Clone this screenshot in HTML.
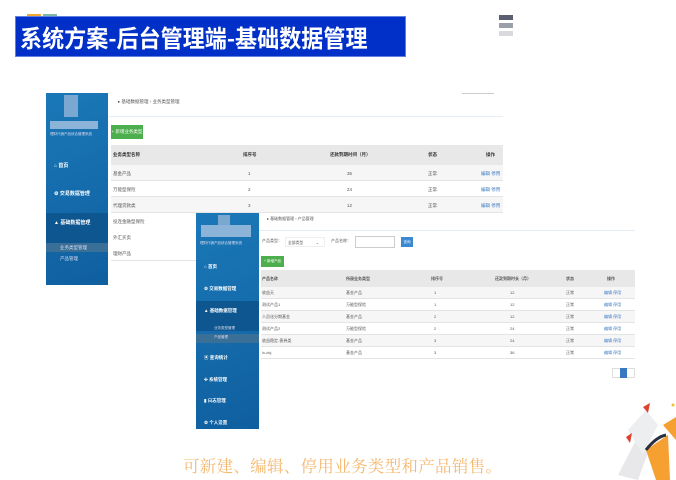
<!DOCTYPE html>
<html><head><meta charset="utf-8"><style>
*{margin:0;padding:0;box-sizing:border-box}
body{width:676px;height:480px;background:#fff;position:relative;overflow:hidden;font-family:"Liberation Sans","Noto Sans CJK SC",sans-serif}
.abs{position:absolute}
.t{font-size:4.5px;color:#555;white-space:nowrap}
.sb{background:linear-gradient(160deg,#1b78b8,#0f5f9f);}
.nav{position:absolute;left:8px;color:#fff;font-size:5px;font-weight:bold}
</style></head><body>
<div class="abs" style="left:27px;top:14px;width:14px;height:3px;background:#f0a830"></div>
<div class="abs" style="left:43px;top:14px;width:14px;height:3px;background:#7fb8a8"></div>
<div class="abs" style="left:15px;top:16px;width:391px;height:41px;background:#0030c8;border:1px solid #6080e0"></div>
<div class="abs" style="left:20px;top:20px;color:#fff;font-size:24px;font-weight:bold;line-height:34px;font-family:'Noto Sans CJK SC',sans-serif;transform:scaleX(0.92);transform-origin:left;white-space:nowrap">系统方案-后台管理端-基础数据管理</div>
<div class="abs" style="left:499px;top:15px;width:14px;height:5px;background:#5a6070"></div>
<div class="abs" style="left:499px;top:23px;width:14px;height:5px;background:#9aa0aa"></div>
<div class="abs" style="left:499px;top:31px;width:14px;height:5px;background:#d8dade"></div>

<!-- screenshot 1 -->
<div class="abs sb" style="left:46px;top:93px;width:62px;height:192px">
 <div class="abs" style="left:18px;top:2px;width:14px;height:22px;background:#7aa8d0"></div>
 <div class="abs" style="left:4px;top:28px;width:48px;height:8px;background:#8cb4d8"></div>
 <div class="abs t" style="left:4px;top:39px;color:#dde;font-size:3.5px">理财代销产品综合管理系统</div>
 <div class="nav" style="top:69px">⌂ 首页</div>
 <div class="nav" style="top:97px">⚙ 交易数据管理</div>
 <div class="abs" style="left:0;top:120px;width:62px;height:32px;background:#0d5690"></div>
 <div class="nav" style="top:126px">▲ 基础数据管理</div>
 <div class="abs" style="left:0;top:150px;width:62px;height:9px;background:#3a6f98"></div>
 <div class="abs t" style="left:14px;top:152px;color:#dde">业务类型管理</div>
 <div class="abs t" style="left:14px;top:163px;color:#dde">产品管理</div>
</div>
<div class="abs" style="left:108px;top:93px;width:395px;height:192px;background:#fff">
 <div class="abs t" style="left:10px;top:6px">▸ 基础数据管理 › 业务类型管理</div>
 <div class="abs" style="left:0;top:23px;width:395px;height:1px;background:#e6eef4"></div>
 <div class="abs" style="left:3px;top:32px;width:32px;height:14px;background:#4cae4c;color:#fff;font-size:4.5px;line-height:14px;text-align:center">+ 新增业务类型</div>
 <div class="abs" style="left:3px;top:52px;width:392px;height:20px;background:#e8e8e8"></div>
 <div class="abs t" style="left:5px;top:59px;font-weight:bold;color:#333">业务类型名称</div>
 <div class="abs t" style="left:135px;top:59px;font-weight:bold;color:#333">排序号</div>
 <div class="abs t" style="left:222px;top:59px;font-weight:bold;color:#333">还款到期时间（月）</div>
 <div class="abs t" style="left:320px;top:59px;font-weight:bold;color:#333">状态</div>
 <div class="abs t" style="left:378px;top:59px;font-weight:bold;color:#333">操作</div>
 <div class="abs" style="left:3px;top:72px;width:392px;height:16px;background:#f6f6f6;border-bottom:1px solid #e4e4e4"></div>
 <div class="abs" style="left:3px;top:88px;width:392px;height:16px;border-bottom:1px solid #e4e4e4"></div>
 <div class="abs" style="left:3px;top:104px;width:392px;height:16px;background:#f6f6f6;border-bottom:1px solid #e4e4e4"></div>
 <div class="abs" style="left:3px;top:120px;width:88px;height:48px;border-bottom:1px solid #e4e4e4"></div>
 <div class="abs t" style="left:5px;top:78px">基金产品</div><div class="abs t" style="left:140px;top:78px">1</div><div class="abs t" style="left:239px;top:78px">36</div><div class="abs t" style="left:320px;top:78px">正常</div><div class="abs t" style="left:373px;top:78px;color:#3a78c0">编辑 停用</div>
 <div class="abs t" style="left:5px;top:94px">万能型保险</div><div class="abs t" style="left:140px;top:94px">2</div><div class="abs t" style="left:239px;top:94px">24</div><div class="abs t" style="left:320px;top:94px">正常</div><div class="abs t" style="left:373px;top:94px;color:#3a78c0">编辑 停用</div>
 <div class="abs t" style="left:5px;top:110px">代理贷款类</div><div class="abs t" style="left:140px;top:110px">3</div><div class="abs t" style="left:239px;top:110px">12</div><div class="abs t" style="left:320px;top:110px">正常</div><div class="abs t" style="left:373px;top:110px;color:#3a78c0">编辑 停用</div>
 <div class="abs t" style="left:5px;top:126px">投连金融型保险</div>
 <div class="abs t" style="left:5px;top:142px">外汇买卖</div>
 <div class="abs t" style="left:5px;top:158px">理财产品</div>
</div>
<div class="abs" style="left:462px;top:93px;width:32px;height:1px;background:#ccc"></div>

<!-- screenshot 2 -->
<div class="abs sb" style="left:196px;top:213px;width:63px;height:216px">
 <div class="abs" style="left:22px;top:2px;width:12px;height:12px;background:#7aa8d0"></div>
 <div class="abs" style="left:5px;top:12px;width:50px;height:12px;background:#8cb4d8"></div>
 <div class="abs t" style="left:4px;top:28px;color:#dde;font-size:3.5px">理财代销产品综合管理系统</div>
 <div class="nav" style="top:51px;font-size:4.5px">⌂ 首页</div>
 <div class="nav" style="top:73px;font-size:4.5px">⚙ 交易数据管理</div>
 <div class="abs" style="left:0;top:88px;width:63px;height:30px;background:#0d5690"></div>
 <div class="nav" style="top:95px;font-size:4.5px">▲ 基础数据管理</div>
 <div class="abs t" style="left:18px;top:113px;color:#dde;font-size:3.5px">业务类型管理</div>
 <div class="abs" style="left:0;top:121px;width:63px;height:9px;background:#3a6f98"></div>
 <div class="abs t" style="left:18px;top:122px;color:#dde;font-size:3.5px">产品管理</div>
 <div class="nav" style="top:142px;font-size:4.5px">▣ 查询统计</div>
 <div class="nav" style="top:164px;font-size:4.5px">✣ 系统管理</div>
 <div class="nav" style="top:185px;font-size:4.5px">▮ 日志管理</div>
 <div class="nav" style="top:207px;font-size:4.5px">⚙ 个人设置</div>
</div>
<div class="abs" style="left:259px;top:213px;width:376px;height:216px;background:#fff">
 <div class="abs t" style="left:8px;top:3px;font-size:4px">▸ 基础数据管理 › 产品管理</div>
 <div class="abs" style="left:0;top:17px;width:376px;height:1px;background:#e6eef4"></div>
 <div class="abs t" style="left:3px;top:25px;font-size:4px">产品类型：</div>
 <div class="abs t" style="left:26px;top:24px;width:40px;height:10px;border:1px solid #eee;padding:2px;font-size:3.8px">全部类型　　　 ⌄</div>
 <div class="abs t" style="left:72px;top:25px;font-size:4px">产品名称：</div>
 <div class="abs" style="left:96px;top:23px;width:40px;height:12px;border:1px solid #ccc"></div>
 <div class="abs" style="left:142px;top:24px;width:12px;height:10px;background:#3a88d0;color:#fff;font-size:3.5px;text-align:center;line-height:10px">查询</div>
 <div class="abs" style="left:2px;top:43px;width:23px;height:11px;background:#4cae4c;color:#fff;font-size:3.5px;line-height:11px;text-align:center">+ 新增产品</div>
 <div class="abs" style="left:2px;top:57px;width:374px;height:17px;background:#e8e8e8"></div>
 <div class="abs t" style="left:3px;top:63px;font-size:4px;font-weight:bold">产品名称</div>
 <div class="abs t" style="left:87px;top:63px;font-size:4px;font-weight:bold">所属业务类型</div>
 <div class="abs t" style="left:172px;top:63px;font-size:4px;font-weight:bold">排序号</div>
 <div class="abs t" style="left:236px;top:63px;font-size:4px;font-weight:bold">还款到期时长（月）</div>
 <div class="abs t" style="left:307px;top:63px;font-size:4px;font-weight:bold">状态</div>
 <div class="abs t" style="left:348px;top:63px;font-size:4px;font-weight:bold">操作</div>
 <div class="abs" style="left:2px;top:74px;width:374px;height:12px;background:#f6f6f6;border-bottom:1px solid #e4e4e4"></div>
 <div class="abs" style="left:2px;top:86px;width:374px;height:12px;border-bottom:1px solid #e4e4e4"></div>
 <div class="abs" style="left:2px;top:98px;width:374px;height:12px;background:#f6f6f6;border-bottom:1px solid #e4e4e4"></div>
 <div class="abs" style="left:2px;top:110px;width:374px;height:12px;border-bottom:1px solid #e4e4e4"></div>
 <div class="abs" style="left:2px;top:122px;width:374px;height:12px;background:#f6f6f6;border-bottom:1px solid #e4e4e4"></div>
 <div class="abs" style="left:2px;top:134px;width:374px;height:12px;border-bottom:1px solid #e4e4e4"></div>
 <div class="abs t" style="left:3px;top:77px;font-size:4px">收益天</div><div class="abs t" style="left:87px;top:77px;font-size:4px">基金产品</div><div class="abs t" style="left:175px;top:77px;font-size:4px">1</div><div class="abs t" style="left:251px;top:77px;font-size:4px">12</div><div class="abs t" style="left:307px;top:77px;font-size:4px">正常</div><div class="abs t" style="left:345px;top:77px;font-size:4px;color:#3a78c0">编辑 停用</div>
 <div class="abs t" style="left:3px;top:89px;font-size:4px">测试产品1</div><div class="abs t" style="left:87px;top:89px;font-size:4px">万能型保险</div><div class="abs t" style="left:175px;top:89px;font-size:4px">1</div><div class="abs t" style="left:251px;top:89px;font-size:4px">12</div><div class="abs t" style="left:307px;top:89px;font-size:4px">正常</div><div class="abs t" style="left:345px;top:89px;font-size:4px;color:#3a78c0">编辑 停用</div>
 <div class="abs t" style="left:3px;top:101px;font-size:4px">人员化分期基金</div><div class="abs t" style="left:87px;top:101px;font-size:4px">基金产品</div><div class="abs t" style="left:175px;top:101px;font-size:4px">2</div><div class="abs t" style="left:251px;top:101px;font-size:4px">12</div><div class="abs t" style="left:307px;top:101px;font-size:4px">正常</div><div class="abs t" style="left:345px;top:101px;font-size:4px;color:#3a78c0">编辑 停用</div>
 <div class="abs t" style="left:3px;top:113px;font-size:4px">测试产品2</div><div class="abs t" style="left:87px;top:113px;font-size:4px">万能型保险</div><div class="abs t" style="left:175px;top:113px;font-size:4px">2</div><div class="abs t" style="left:251px;top:113px;font-size:4px">24</div><div class="abs t" style="left:307px;top:113px;font-size:4px">正常</div><div class="abs t" style="left:345px;top:113px;font-size:4px;color:#3a78c0">编辑 停用</div>
 <div class="abs t" style="left:3px;top:125px;font-size:4px">收益稳定-债券类</div><div class="abs t" style="left:87px;top:125px;font-size:4px">基金产品</div><div class="abs t" style="left:175px;top:125px;font-size:4px">3</div><div class="abs t" style="left:251px;top:125px;font-size:4px">24</div><div class="abs t" style="left:307px;top:125px;font-size:4px">正常</div><div class="abs t" style="left:345px;top:125px;font-size:4px;color:#3a78c0">编辑 停用</div>
 <div class="abs t" style="left:3px;top:137px;font-size:4px">lx-dcj</div><div class="abs t" style="left:87px;top:137px;font-size:4px">基金产品</div><div class="abs t" style="left:175px;top:137px;font-size:4px">3</div><div class="abs t" style="left:251px;top:137px;font-size:4px">36</div><div class="abs t" style="left:307px;top:137px;font-size:4px">正常</div><div class="abs t" style="left:345px;top:137px;font-size:4px;color:#3a78c0">编辑 停用</div>
 <div class="abs" style="left:353px;top:155px;width:23px;height:10px;border:1px solid #ddd"></div>
 <div class="abs" style="left:361px;top:155px;width:7px;height:10px;background:#3a78c0"></div>
</div>

<div class="abs" style="left:183px;top:453px;font-size:16.5px;color:#f5b870;font-family:'Noto Serif CJK SC',serif;white-space:nowrap;letter-spacing:0.3px">可新建、编辑、停用业务类型和产品销售。</div>

<svg class="abs" style="left:608px;top:395px" width="68" height="85" viewBox="0 0 68 85">
 <polygon points="10,80 28,45 42,52 30,85" fill="#e8e8ea"/>
 <polygon points="20,35 38,15 50,30 35,60" fill="#eceef0"/>
 <polygon points="35,12 42,8 40,18" fill="#e04030"/>
 <polygon points="18,42 24,38 22,48" fill="#e04030"/>
 <path d="M38 55 L60 40 L62 85 L48 85 Z" fill="#f5a030"/>
 <path d="M38 55 Q48 42 58 40" stroke="#2a3040" stroke-width="3" fill="none"/>
 <path d="M55 30 L68 22 L68 45 Z" fill="#f5a030"/>
 <circle cx="65" cy="10" r="1.5" fill="#f5c030"/>
</svg>
</body></html>
